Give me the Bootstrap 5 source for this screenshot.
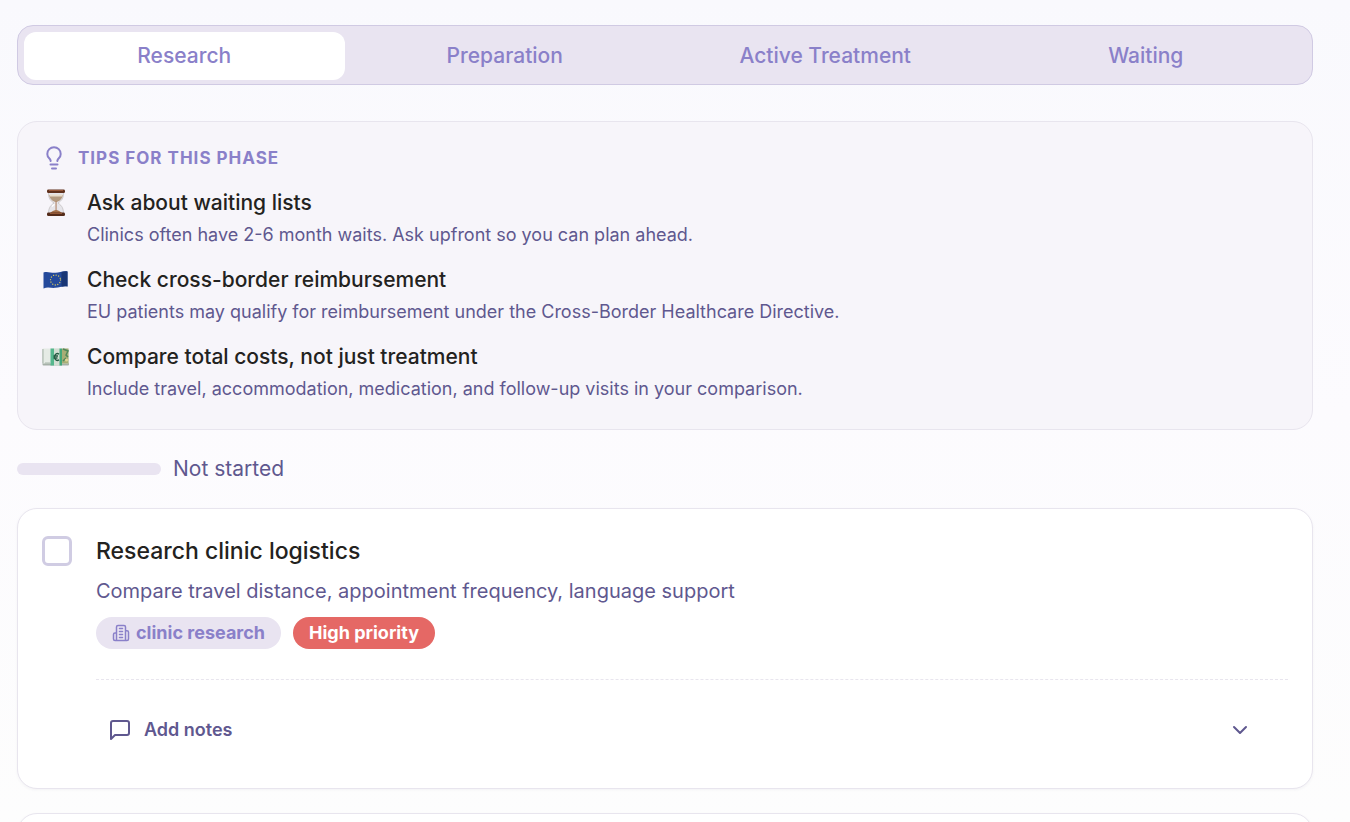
<!DOCTYPE html>
<html lang="en">
<head>
<meta charset="utf-8">
<meta name="viewport" content="width=device-width, initial-scale=1">
<title>Treatment checklist</title>
<link rel="stylesheet" href="https://cdn.jsdelivr.net/npm/bootstrap@5.3.0/dist/css/bootstrap.min.css">
<style>
  :root { --violet: #8a80c9; --violet-dark: #5f588f; --lilac: #e9e4f1; --line: #e8e5ee; --ink: #232220; }
  body { font-family: Inter, "Liberation Sans", sans-serif; color: var(--violet-dark); background: linear-gradient(#f9f9fd, #fcfbfe 50%, #fdfdfd); font-size: 20px; line-height: 32px; }
  .page { padding: 25px 37px 0 17px; }
  .phase-tabs { background: var(--lilac); border: 1px solid #d0cae3; border-radius: 16px; padding: 6px 6px 4px; margin-bottom: 36px; }
  .phase-tabs .nav-link { color: var(--violet); font-size: 21px; font-weight: 500; border-radius: 12px; padding: 8px; }
  .phase-tabs .nav-link.active { color: var(--violet); background: #fff; }
  .panel { border: 1px solid var(--line); border-radius: 20px; padding: 24px; }
  .tips { background: #f7f5fa; margin-bottom: 23px; }
  .tips-title { font-size: 17px; line-height: 24px; font-weight: 700; letter-spacing: 1px; color: var(--violet); gap: 12px; margin-bottom: 17px; }
  .tip-list { gap: 13px; }
  .tip { gap: 17px; }
  .tip-icon { width: 28px; height: 32px; }
  .tip-name { font-size: 21px; font-weight: 500; color: var(--ink); }
  .tip-text { font-size: 18px; }
  .status { gap: 12px; margin-bottom: 23px; font-size: 21px; }
  .status .progress { width: 144px; height: 12px; border-radius: 6px; background: var(--lilac); }
  .task { background: #fff; margin-bottom: 24px; box-shadow: 0 1px 3px rgba(60, 50, 100, .05); }
  .task-row { gap: 24px; }
  .task .form-check-input { width: 30px; height: 30px; margin: 3px 0 0; border: 3px solid #d0cce3; border-radius: 6px; }
  .task-name { font-size: 23px; line-height: 36px; font-weight: 500; color: var(--ink); margin-bottom: 6px; }
  .tags { gap: 12px; margin-top: 10px; }
  .tag { height: 32px; padding: 0 16px; gap: 6px; font-size: 18px; font-weight: 700; line-height: 32px; }
  .tag-topic { background: var(--lilac); color: var(--violet); }
  .tag-high { background: #e56865; color: #fff; }
  .notes { border-top: 1px dashed var(--line); margin-top: 30px; padding: 24px 0 8px; }
  .notes-btn { color: var(--violet-dark); font-size: 18px; font-weight: 600; line-height: 32px; padding: 10px 36px 10px 12px; border: 0; gap: 12px; }
  .line-icon { fill: none; stroke: currentColor; stroke-width: 2; stroke-linecap: round; stroke-linejoin: round; }
</style>
</head>
<body>
<main class="page vh-100 overflow-hidden">
  <nav class="phase-tabs nav nav-pills nav-justified" aria-label="Phases">
    <button type="button" class="nav-link active">Research</button>
    <button type="button" class="nav-link">Preparation</button>
    <button type="button" class="nav-link">Active Treatment</button>
    <button type="button" class="nav-link">Waiting</button>
  </nav>

  <section class="panel tips">
    <h2 class="tips-title d-flex align-items-center text-uppercase">
      <svg class="line-icon" width="24" height="24" viewBox="0 0 24 24"><path d="M15.300 15c.2-1.200 .7-1.900 1.500-2.700 1.100-1.100 1.900-2.600 1.900-4.400a6.700 6.700 0 0 0-13.400 0c0 1.800 .8 3.300 1.900 4.400 .8 .8 1.300 1.500 1.500 2.700M8.500 18.500h7M10 22.500h4"/></svg>
      Tips for this phase
    </h2>
    <ul class="tip-list list-unstyled d-flex flex-column mb-0">
      <li class="tip d-flex">
        <svg class="tip-icon flex-shrink-0" viewBox="0 0 28 32" aria-hidden="true">
          <path d="M6.500 5h15c0 6-1 8-5.500 11 4.500 3 5.500 6 5.500 11h-15c0-5 1-8 5.500-11C7.500 13 6.500 11 6.500 5z" fill="#e6e5ea" stroke="#b8b4b4" stroke-width=".6"/>
          <path d="M7 8h14c-.5 3-2 5-5.500 6.800h-3C9 13 7.500 11 7 8z" fill="#b39a80"/>
          <path d="M7.500 7.500h13v2h-13z" fill="#e8dccb"/>
          <path d="M13.600 14h.9v9c2 .5 4.500 1.500 5.500 3.500H8c1-2 3.600-3 5.600-3.500z" fill="#a5714b"/>
          <path d="M10 19.500c1-1.500 2-2 2.600-2.200" stroke="#fff" stroke-width="1.400" fill="none"/>
          <rect x="5" y="2.500" width="18" height="3.600" rx="1.400" fill="#60311d"/><rect x="7" y="3" width="14" height="1" fill="#985739"/>
          <rect x="5" y="25.500" width="18" height="3.600" rx="1.400" fill="#542b19"/><rect x="8" y="25.800" width="12" height="1" fill="#a4633d"/>
        </svg>
        <div><div class="tip-name">Ask about waiting lists</div><div class="tip-text">Clinics often have 2-6 month waits. Ask upfront so you can plan ahead.</div></div>
      </li>
      <li class="tip d-flex">
        <svg class="tip-icon flex-shrink-0" viewBox="0 0 28 32" aria-hidden="true">
          <path d="M1.500 8.500c4-1.500 8 .8 12 .3s8-2.300 12-1.300v15c-4-1-8 .8-12 1.300s-8-1.300-12 .7z" fill="#24499b"/>
          <path d="M19.500 8c2-.6 4-.8 6-.5v15c-2-.5-4-.3-6 .2z" fill="#193675"/>
          <circle cx="13.500" cy="16" r="5" fill="none" stroke="#d5c75b" stroke-width="1.300" stroke-linecap="round" stroke-dasharray=".1 2.518"/>
        </svg>
        <div><div class="tip-name">Check cross-border reimbursement</div><div class="tip-text">EU patients may qualify for reimbursement under the Cross-Border Healthcare Directive.</div></div>
      </li>
      <li class="tip d-flex">
        <svg class="tip-icon flex-shrink-0" viewBox="0 0 28 32" aria-hidden="true">
          <rect x="0.500" y="8" width="26.500" height="16.500" rx="1" fill="#a5b0a7"/>
          <rect x="0.500" y="7.500" width="26.500" height="15" rx="1" fill="#e5ebe5"/>
          <path d="M1 8v14M3 22h5" stroke="#a8b5aa"/>
          <path d="M8.500 7.500H12v17H8.500z" fill="#55b78d"/>
          <path d="M12 7.500h6v17h-6z" fill="#d3ded3"/>
          <path d="M17 13.200a3 3.300 0 1 0 0 5.600M11.500 15h4.500M11.500 17h4" fill="none" stroke="#245b43" stroke-width="1.400"/>
          <path d="M17.500 7.500h2.500v17h-2.500z" fill="#42a77a"/>
          <path d="M20 7.500h6.500v15H20z" fill="#a7ad76"/>
          <path d="M21 8l5 2-2 4 2 2M21 20l3-3" stroke="#50885b" stroke-width="1.500" fill="none"/><circle cx="24.500" cy="19" r="1.500" fill="#e1d597"/>
        </svg>
        <div><div class="tip-name">Compare total costs, not just treatment</div><div class="tip-text">Include travel, accommodation, medication, and follow-up visits in your comparison.</div></div>
      </li>
    </ul>
  </section>

  <div class="status d-flex align-items-center">
    <div class="progress" role="progressbar" aria-label="Phase progress" aria-valuenow="0" aria-valuemin="0" aria-valuemax="100"></div>
    <span>Not started</span>
  </div>

  <article class="panel task">
    <div class="task-row d-flex">
      <input class="form-check-input flex-shrink-0" type="checkbox" id="task-logistics">
      <div class="flex-grow-1">
        <label class="task-name d-block" for="task-logistics">Research clinic logistics</label>
        <div>Compare travel distance, appointment frequency, language support</div>
        <div class="tags d-flex">
          <span class="tag tag-topic rounded-pill d-inline-flex align-items-center">
            <svg class="line-icon" width="18" height="18" viewBox="0 0 24 24"><path d="M6 22V4a2 2 0 0 1 2-2h8a2 2 0 0 1 2 2v18ZM6 12H4a2 2 0 0 0-2 2v6a2 2 0 0 0 2 2h2M18 9h2a2 2 0 0 1 2 2v9a2 2 0 0 1-2 2h-2M10 6h4M10 10h4M10 14h4M10 18h4"/></svg>
            clinic research</span>
          <span class="tag tag-high rounded-pill">High priority</span>
        </div>
        <div class="notes">
          <button type="button" class="notes-btn btn d-flex align-items-center w-100">
            <svg class="line-icon" width="24" height="24" viewBox="0 0 24 24"><path d="M21 15a2 2 0 0 1-2 2H7l-4 4V5a2 2 0 0 1 2-2h14a2 2 0 0 1 2 2z"/></svg>
            Add notes
            <svg class="line-icon ms-auto" width="24" height="24" viewBox="0 0 24 24"><path d="m6 9 6 6 6-6"/></svg>
          </button>
        </div>
      </div>
    </div>
  </article>
  <article class="panel task"></article>
</main>
<script src="https://cdn.jsdelivr.net/npm/bootstrap@5.3.0/dist/js/bootstrap.bundle.min.js"></script>
</body>
</html>
